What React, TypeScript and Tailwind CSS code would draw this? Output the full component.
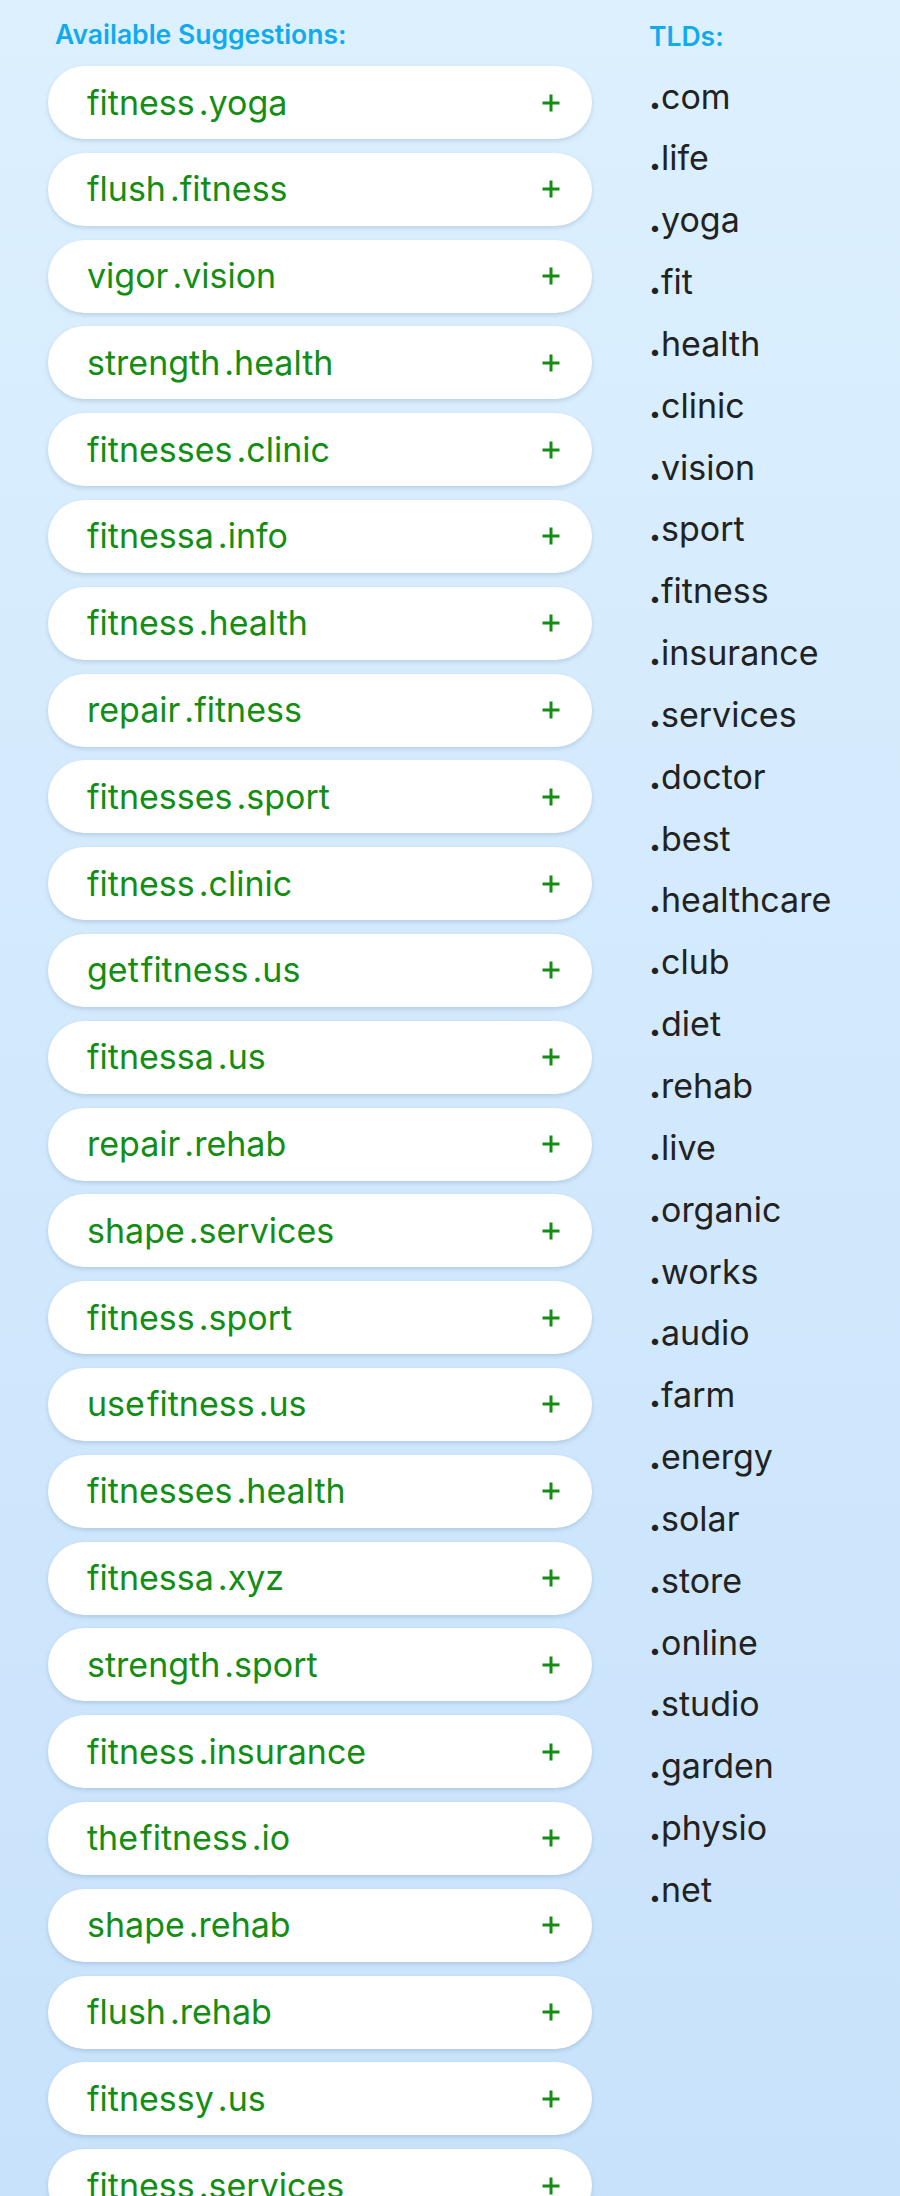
const suggestions: [string, string, string][] = [
  ["", "fitness", "yoga"],
  ["flush", "", "fitness"],
  ["vigor", "", "vision"],
  ["strength", "", "health"],
  ["", "fitnesses", "clinic"],
  ["", "fitnessa", "info"],
  ["", "fitness", "health"],
  ["repair", "", "fitness"],
  ["", "fitnesses", "sport"],
  ["", "fitness", "clinic"],
  ["get", "fitness", "us"],
  ["", "fitnessa", "us"],
  ["repair", "", "rehab"],
  ["shape", "", "services"],
  ["", "fitness", "sport"],
  ["use", "fitness", "us"],
  ["", "fitnesses", "health"],
  ["", "fitnessa", "xyz"],
  ["strength", "", "sport"],
  ["", "fitness", "insurance"],
  ["the", "fitness", "io"],
  ["shape", "", "rehab"],
  ["flush", "", "rehab"],
  ["", "fitnessy", "us"],
  ["", "fitness", "services"],
];

const tlds = [
  "com", "life", "yoga", "fit", "health", "clinic", "vision", "sport", "fitness",
  "insurance", "services", "doctor", "best", "healthcare", "club", "diet", "rehab",
  "live", "organic", "works", "audio", "farm", "energy", "solar", "store", "online",
  "studio", "garden", "physio", "net",
];

const PlusIcon = () => (
  <svg width="18" height="18" viewBox="0 0 18 18" className="shrink-0">
    <path d="M9 0.5V17.5M0.5 9H17.5" stroke="#138d13" strokeWidth="3" />
  </svg>
);

export default function App() {
  return (
    <div className="min-h-[2196px] w-full bg-gradient-to-b from-[#dcf0fe] to-[#c8e2fb] font-['Inter',sans-serif]">
      <div className="flex pt-[19px]">
        {/* Suggestions column */}
        <div className="ml-[48px] w-[544px] shrink-0">
          <h2 className="pl-[7px] text-[26.5px] leading-[31px] font-semibold text-[#12aaee]">
            Available Suggestions:
          </h2>
          <ul className="mt-[16px] flex flex-col gap-[13.8px]">
            {suggestions.map(([pre, key, tld], i) => (
              <li
                key={i}
                className="flex h-[73px] items-center justify-between rounded-full bg-white pl-[39px] pr-[32px] shadow-[0_2px_4px_rgba(40,80,120,0.18)]"
              >
                <span className="text-[34px] leading-none text-[#138d13] whitespace-nowrap">
                  {pre && <span>{pre}</span>}
                  {key && <span className={pre ? "ml-[2px]" : ""}>{key}</span>}
                  <span className="ml-[4px]">.{tld}</span>
                </span>
                <PlusIcon />
              </li>
            ))}
          </ul>
        </div>

        {/* TLD column */}
        <div className="ml-[57px]">
          <h2 className="text-[26.5px] leading-[31px] font-semibold text-[#12aaee] pt-[2px]">TLDs:</h2>
          <ul className="mt-[13.5px]">
            {tlds.map((t) => (
              <li key={t} className="text-[34px] leading-[61.84px] text-[#222222]">
                <span className="font-extrabold">.</span>
                <span>{t}</span>
              </li>
            ))}
          </ul>
        </div>
      </div>
    </div>
  );
}
